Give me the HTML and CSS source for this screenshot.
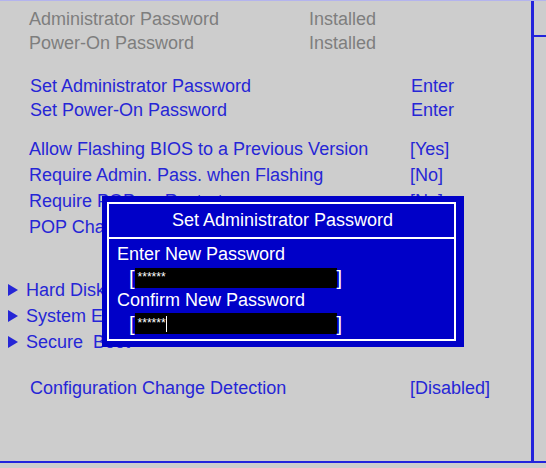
FILE: index.html
```html
<!DOCTYPE html>
<html>
<head>
<meta charset="utf-8">
<link rel="stylesheet" href="styles.css">
</head>
<body>
<div class="screen">
  <div class="main">
    <div class="group g1">
      <div class="row"><span class="label lw1">Administrator Password</span><span>Installed</span></div>
      <div class="row"><span class="label lw1">Power-On Password</span><span>Installed</span></div>
    </div>
    <div class="group g2 blue">
      <div class="row"><span class="label lw2">Set Administrator Password</span><span>Enter</span></div>
      <div class="row"><span class="label lw2">Set Power-On Password</span><span>Enter</span></div>
    </div>
    <div class="group g3 blue">
      <div class="row"><span class="label lw3">Allow Flashing BIOS to a Previous Version</span><span>[Yes]</span></div>
      <div class="row"><span class="label lw3">Require Admin. Pass. when Flashing</span><span>[No]</span></div>
      <div class="row"><span class="label lw3">Require POP on Restart</span><span>[No]</span></div>
      <div class="row"><span class="label lw3">POP Change Requires SVP</span><span>[No]</span></div>
    </div>
    <div class="group g4 blue">
      <div class="row sub"><svg class="tri" width="10" height="12" viewBox="0 0 10 12"><path d="M0 0 L10 6 L0 12 Z" fill="#2626d6"/></svg><span>Hard Disk Security</span></div>
      <div class="row sub"><svg class="tri" width="10" height="12" viewBox="0 0 10 12"><path d="M0 0 L10 6 L0 12 Z" fill="#2626d6"/></svg><span>System Event Log</span></div>
      <div class="row sub"><svg class="tri" width="10" height="12" viewBox="0 0 10 12"><path d="M0 0 L10 6 L0 12 Z" fill="#2626d6"/></svg><span>Secure&nbsp; Boot</span></div>
    </div>
    <div class="group g5 blue">
      <div class="row"><span class="label lw3c">Configuration Change Detection</span><span>[Disabled]</span></div>
    </div>
  </div>
  <div class="side"><div class="tick"></div></div>
</div>
<div class="bottom-line"></div>

<div class="dialog">
  <div class="dlg-inner">
    <div class="dlg-title">Set Administrator Password</div>
    <div class="dlg-body">
      <div class="dlg-label">Enter New Password</div>
      <div class="field"><span class="br">[</span><span class="box"><span class="stars">******</span></span><span class="br">]</span></div>
      <div class="dlg-label l2">Confirm New Password</div>
      <div class="field f2"><span class="br">[</span><span class="box"><span class="stars">******</span><span class="cursor"></span></span><span class="br">]</span></div>
    </div>
  </div>
</div>
</body>
</html>
```
FILE: styles.css
```css
html, body {
  margin: 0;
  padding: 0;
}
body {
  width: 546px;
  height: 468px;
  background: #cdcdcd;
  font-family: "Liberation Sans", Arial, sans-serif;
  font-size: 18px;
  position: relative;
  overflow: hidden;
  border-top: 1px solid #b4b4ee;
  box-sizing: border-box;
}
.screen {
  display: flex;
  height: 460px;
}
.main {
  width: 531px;
  flex: none;
}
.side {
  width: 3px;
  background: #2323dc;
  position: relative;
}
.tick {
  position: absolute;
  left: 3px;
  top: 34px;
  width: 12px;
  height: 2px;
  background: #2323dc;
}
.bottom-line {
  height: 2px;
  background: #2323dc;
}
.row {
  display: flex;
  align-items: center;
  white-space: nowrap;
}
.g1 { padding-top: 6px; color: #7e7e7e; }
.g1 .row { height: 24px; padding-left: 29px; }
.lw1 { width: 280px; }
.g2 { margin-top: 19px; }
.g2 .row { height: 24px; padding-left: 30px; }
.lw2 { width: 381px; }
.g3 { margin-top: 14px; }
.g3 .row { height: 26px; padding-left: 29px; }
.lw3 { width: 381px; }
.g4 { margin-top: 37px; }
.g4 .row { height: 26px; padding-left: 8px; }
.tri { margin-right: 8px; flex: none; }
.g5 { margin-top: 20px; }
.g5 .row { height: 26px; padding-left: 30px; }
.lw3c { width: 380px; }
.blue { color: #2626d6; }

.dialog {
  position: absolute;
  left: 102px;
  top: 195px;
  width: 362px;
  height: 151px;
  background: #0000c8;
  box-sizing: border-box;
  padding: 6px 8px 6px 5px;
}
.dlg-inner {
  border: 2px solid #ffffff;
  height: 139px;
  box-sizing: border-box;
  color: #ffffff;
}
.dlg-title {
  height: 33px;
  border-bottom: 2px solid #ffffff;
  text-align: center;
  line-height: 33px;
  padding-left: 2px;
}
.dlg-body {
  padding-left: 8px;
}
.dlg-label {
  height: 24px;
  line-height: 24px;
  margin-top: 3px;
}
.l2 { margin-top: 0; height: 22px; line-height: 22px; }
.field {
  display: flex;
  align-items: center;
  height: 22px;
  padding-left: 12px;
  margin-top: 1px;
}
.f2 { margin-top: 1px; height: 23px; }
.br {
  color: #ffffff;
  font-size: 20px;
  line-height: 20px;
}
.box {
  width: 202px;
  height: 20px;
  background: #000000;
  display: flex;
  align-items: center;
  padding-left: 3px;
  box-sizing: border-box;
}
.f2 .box { height: 21px; }
.stars {
  font-size: 12px;
  line-height: 12px;
  color: #ffffff;
  position: relative;
  top: -1px;
}
.cursor {
  width: 1px;
  height: 16px;
  background: #ffffff;
}
```
